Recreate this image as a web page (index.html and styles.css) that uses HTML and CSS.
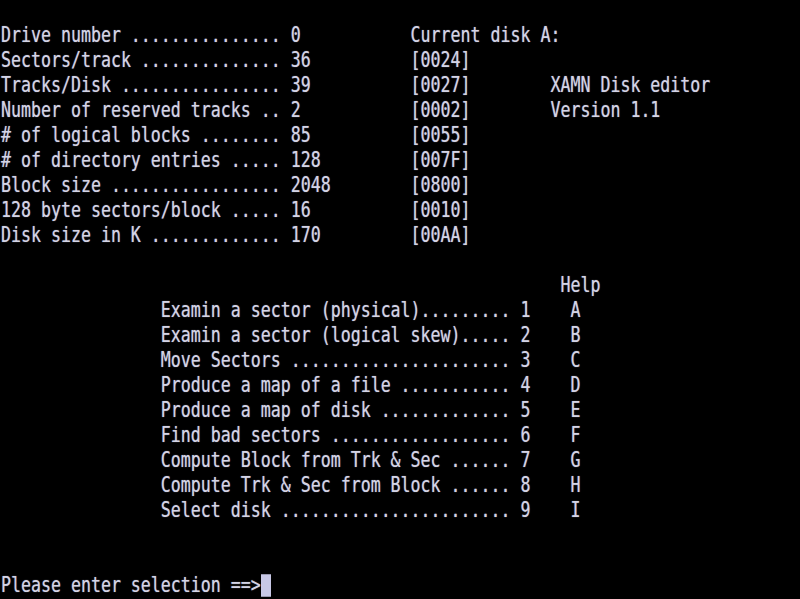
FILE: index.html
```html
<!DOCTYPE html>
<html lang="en">
<head>
<meta charset="utf-8">
<title>XAMN Disk editor</title>
<link rel="stylesheet" href="styles.css">
</head>
<body>
<main class="screen">
<pre class="term">

Drive number ............... 0           Current disk A:
Sectors/track .............. 36          [0024]
Tracks/Disk ................ 39          [0027]        XAMN Disk editor
Number of reserved tracks .. 2           [0002]        Version 1.1
# of logical blocks ........ 85          [0055]
# of directory entries ..... 128         [007F]
Block size ................. 2048        [0800]
128 byte sectors/block ..... 16          [0010]
Disk size in K ............. 170         [00AA]

                                                        Help
                Examin a sector (physical)......... 1    A
                Examin a sector (logical skew)..... 2    B
                Move Sectors ...................... 3    C
                Produce a map of a file ........... 4    D
                Produce a map of disk ............. 5    E
                Find bad sectors .................. 6    F
                Compute Block from Trk &amp; Sec ...... 7    G
                Compute Trk &amp; Sec from Block ...... 8    H
                Select disk ....................... 9    I


Please enter selection ==&gt;<span class="cursor"></span></pre>
</main>
</body>
</html>
```

FILE: styles.css
```css
html, body {
  margin: 0;
  padding: 0;
  background: #000;
  overflow: hidden;
}

.screen {
  width: 800px;
  height: 599px;
  background: #000;
  overflow: hidden;
}

.term {
  margin: -2px 0 0 0;
  padding: 0 0 0 1px;
  font-family: "DejaVu Sans Mono", "Liberation Mono", monospace;
  font-size: 16.6px;
  line-height: 20px;
  color: #d4d4e6;
  white-space: pre;
  transform: scaleY(1.25);
  transform-origin: 0 0;
  text-shadow: 0 0 1px rgba(210, 210, 235, 0.6);
}

.cursor {
  display: inline-block;
  width: 10px;
  height: 18px;
  background: #c8c8e6;
  vertical-align: -4px;
}
```
